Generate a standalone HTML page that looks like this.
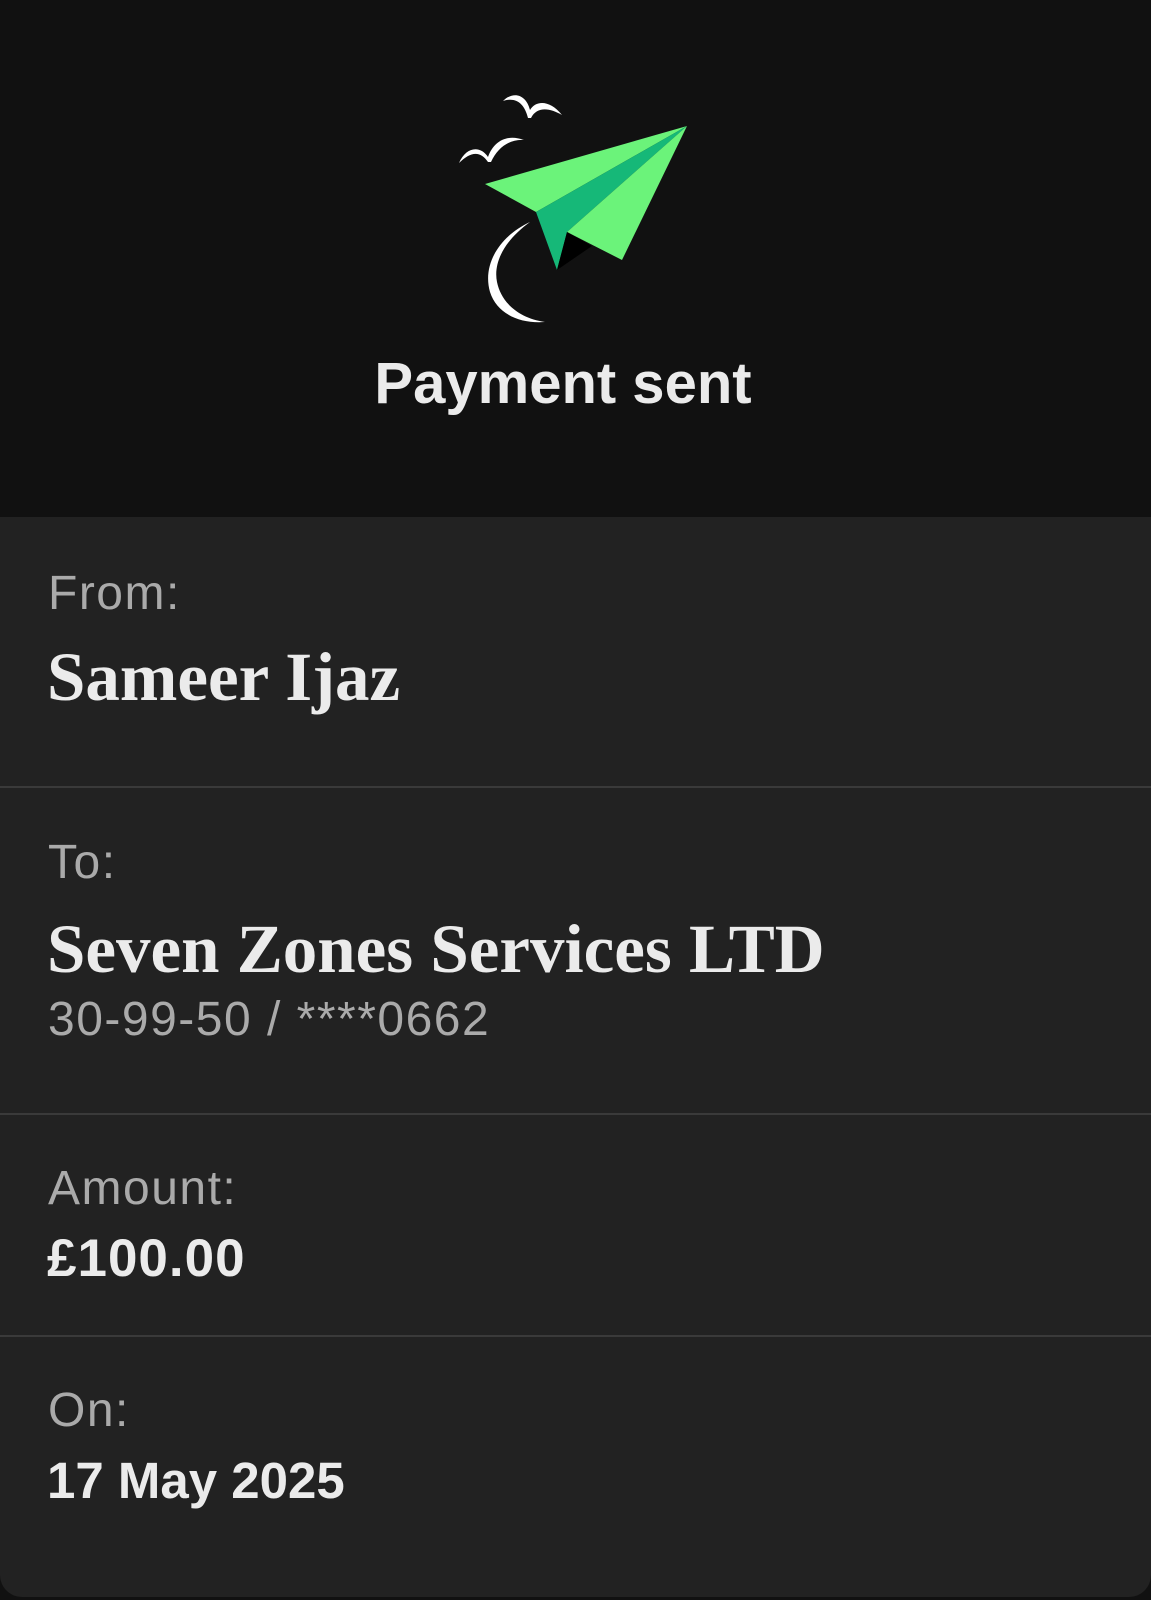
<!DOCTYPE html>
<html><head><meta charset="utf-8"><style>
html,body{margin:0;padding:0;background:#111;width:1151px;height:1600px;overflow:hidden;position:relative;font-family:"Liberation Sans",sans-serif}
.card{position:absolute;left:0;top:517px;width:1151px;height:1080px;background:#222;border-radius:0 0 22px 22px}
.t{position:absolute;line-height:1;white-space:nowrap}
.l{left:48px;font-size:48px;color:#aaa;letter-spacing:1.5px}
.v{left:47px;font-size:69px;font-weight:bold;color:#ebebeb;font-family:"Liberation Serif",serif}
.s{left:47px;font-size:53px;font-weight:bold;color:#ebebeb;letter-spacing:1px}
.sep{position:absolute;left:0;width:1151px;height:2px;background:#3a3a3a}
</style></head><body>
<svg style="position:absolute;left:0;top:0" width="1151" height="517">
<polygon points="485,184 687,126 536,212" fill="#6bf37a"/>
<polygon points="536,212 687,126 567,232 557,270" fill="#16b878"/>
<polygon points="567,232 687,126 622,260" fill="#6bf37a"/>
<polygon points="567,232 557,270 592,246" fill="#000"/>
<path d="M530,222 C500,236 482,264 490,292 C497,314 520,324 545,322 C518,318 501,302 497,282 C493,262 505,240 530,222Z" fill="#fff"/>
<path d="M503,101 C513,91 526,94 530,110 C536,100 550,100 562,115 C550,108 537,106 531,118 L528,118 C524,102 515,97 503,101Z" fill="#fff"/>
<path d="M459,163 C466,147 480,145 488,157 C494,140 508,134 524,140 C510,139 498,147 491,162 L488,162 C480,150 470,152 459,163Z" fill="#fff"/>
</svg>
<div class="t" style="left:0;width:1126px;text-align:center;top:355px;font-size:58px;font-weight:bold;color:#ebebeb">Payment sent</div>
<div class="card"></div>
<div class="t l" style="top:570px">From:</div>
<div class="t v" style="top:643px">Sameer Ijaz</div>
<div class="sep" style="top:786px"></div>
<div class="t l" style="top:839px">To:</div>
<div class="t v" style="top:915px">Seven Zones Services LTD</div>
<div class="t l" style="top:996px">30-99-50 / ****0662</div>
<div class="sep" style="top:1113px"></div>
<div class="t l" style="top:1165px">Amount:</div>
<div class="t s" style="top:1232px">£100.00</div>
<div class="sep" style="top:1335px"></div>
<div class="t l" style="top:1387px">On:</div>
<div class="t s" style="top:1455px;font-size:51px;letter-spacing:0">17 May 2025</div>
</body></html>
